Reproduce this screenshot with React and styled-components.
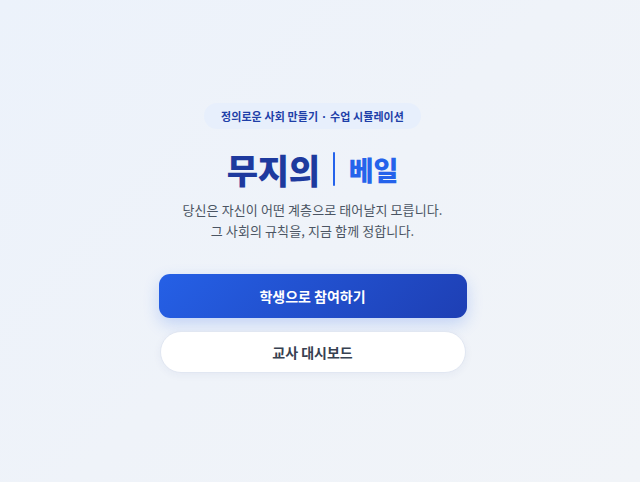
import React from "react";
import styled, { createGlobalStyle } from "styled-components";

const Global = createGlobalStyle`
  html, body { margin: 0; padding: 0; height: 100%; }
  body {
    font-family: "Noto Sans CJK KR", "Noto Sans", sans-serif;
    background: linear-gradient(135deg, #ecf2fb 0%, #eff3f9 50%, #f1f4f8 100%);
  }
  #root { height: 100%; }
`;

const Page = styled.main`
  box-sizing: border-box;
  height: 482px;
  padding: 103px 15px 0 0;
  display: flex;
  align-items: flex-start;
  justify-content: center;
`;

const Column = styled.div`
  width: 308px;
  display: flex;
  flex-direction: column;
  align-items: center;
`;

const Badge = styled.div`
  background: #e7effc;
  color: #1e3fa8;
  font-size: 11px;
  font-weight: 700;
  line-height: 16px;
  padding: 5px 17px;
  border-radius: 999px;
  letter-spacing: 0.1px;
`;

const Title = styled.h1`
  margin: 19px 0 0;
  display: flex;
  align-items: center;
  gap: 13px;
  line-height: 44px;
`;

const Main = styled.span`
  font-size: 34px;
  font-weight: 900;
  color: #1e3a9e;
  letter-spacing: -0.3px;
`;

const Divider = styled.span`
  width: 2px;
  height: 34px;
  background: #2563eb;
  border-radius: 1px;
  margin-top: -2px;
`;

const Sub = styled.span`
  font-size: 27px;
  font-weight: 800;
  color: #2563eb;
  margin-left: 1px;
`;

const Desc = styled.p`
  margin: 7px 0 0;
  text-align: center;
  font-size: 13px;
  line-height: 21px;
  color: #4b5563;
  letter-spacing: 0.1px;
`;

const Buttons = styled.div`
  margin-top: 33px;
  width: 100%;
  display: flex;
  flex-direction: column;
  gap: 13px;
`;

const Primary = styled.button`
  height: 44px;
  border: none;
  border-radius: 11px;
  background: linear-gradient(135deg, #2560e6 0%, #1e3fb4 100%);
  color: #fff;
  font-family: inherit;
  font-size: 14px;
  font-weight: 700;
  box-shadow: 0 6px 16px rgba(37, 99, 235, 0.22);
  cursor: pointer;
`;

const Secondary = styled.button`
  height: 42px;
  margin: 0 1px;
  border: 1px solid #e1e7f2;
  border-radius: 999px;
  background: #fff;
  color: #374151;
  font-family: inherit;
  font-size: 14px;
  font-weight: 700;
  box-shadow: 0 2px 8px rgba(30, 58, 138, 0.05);
  cursor: pointer;
`;

export default function App() {
  return (
    <>
      <Global />
      <Page>
        <Column>
          <Badge>정의로운 사회 만들기 · 수업 시뮬레이션</Badge>
          <Title>
            <Main>무지의</Main>
            <Divider />
            <Sub>베일</Sub>
          </Title>
          <Desc>
            당신은 자신이 어떤 계층으로 태어날지 모릅니다.
            <br />
            그 사회의 규칙을, 지금 함께 정합니다.
          </Desc>
          <Buttons>
            <Primary>학생으로 참여하기</Primary>
            <Secondary>교사 대시보드</Secondary>
          </Buttons>
        </Column>
      </Page>
    </>
  );
}
